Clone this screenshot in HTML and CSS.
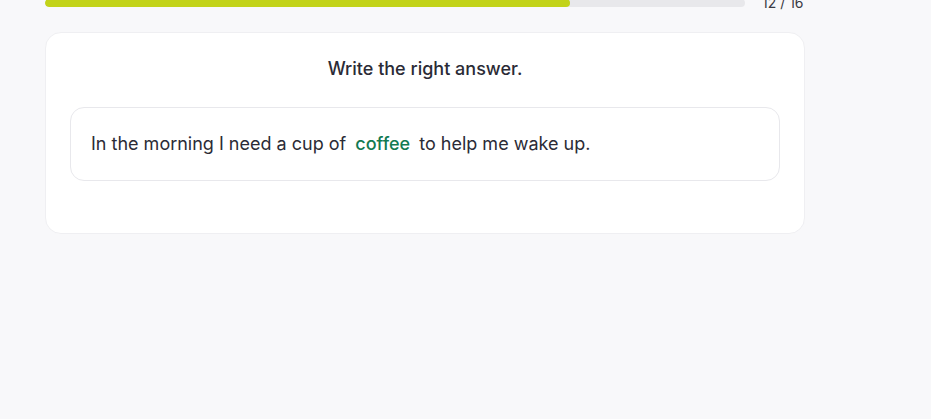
FILE: index.html
```html
<!DOCTYPE html>
<html>
<head>
<meta charset="utf-8">
<link rel="stylesheet" href="styles.css">
</head>
<body>
<div class="page">
  <div class="progress-row">
    <div class="track"><div class="fill" style="width:75%"></div></div>
    <span class="count">12 / 16</span>
  </div>
  <div class="card">
    <h2 class="title">Write the right answer.</h2>
    <div class="sentence-box">
      <p class="sentence">In the morning I need a cup of <span class="answer">coffee</span> to help me wake up.</p>
    </div>
  </div>
</div>
</body>
</html>
```
FILE: styles.css
```css
html, body {
  margin: 0;
  padding: 0;
  background: #f8f8fa;
  font-family: Inter, "Noto Sans", sans-serif;
  color: #2b2b36;
}
.page {
  width: 760px;
  padding-left: 45px;
}
.progress-row {
  display: flex;
  align-items: center;
  gap: 17px;
  height: 20px;
  margin-top: -10px;
}
.track {
  width: 700px;
  height: 8px;
  background: #e8e8eb;
  border-radius: 4px;
  overflow: hidden;
  margin-top: 6px;
}
.fill {
  height: 100%;
  background: #c2d319;
  border-radius: 4px;
}
.count {
  font-size: 14px;
  line-height: 20px;
  color: #3a3a44;
  position: relative;
  top: 3px;
}
.card {
  margin-top: 22px;
  background: #fff;
  border: 1px solid #efeff2;
  border-radius: 16px;
  padding: 23px 24px 52px;
}
.title {
  margin: 0;
  text-align: center;
  font-size: 18px;
  font-weight: 500;
  line-height: 26px;
  color: #2b2b36;
}
.sentence-box {
  margin-top: 25px;
  border: 1px solid #e8e8ec;
  border-radius: 14px;
  padding: 24px 20px;
}
.sentence {
  margin: 0;
  font-size: 18px;
  line-height: 24px;
}
.answer {
  color: #137a52;
  font-weight: 500;
  margin: 0 4px;
}
```
